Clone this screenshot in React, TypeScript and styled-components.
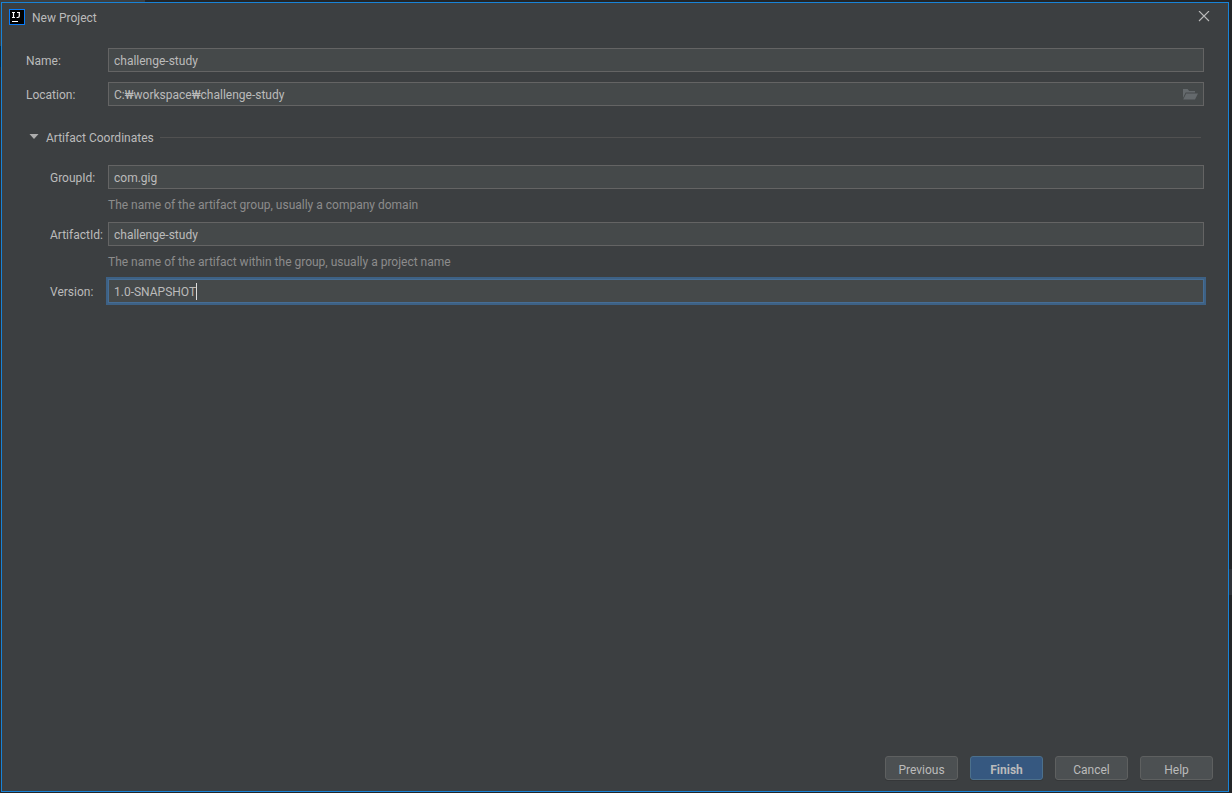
import React from "react";
import styled, { createGlobalStyle, css } from "styled-components";

const GlobalStyle = createGlobalStyle`
  * { box-sizing: border-box; }
  body {
    margin: 0;
    background: #232527;
    color: #bbbbbb;
    font-family: Roboto, "Noto Sans CJK KR", sans-serif;
    font-size: 12px;
    line-height: 16px;
  }
  input, button { font: inherit; color: inherit; }
`;

const Backdrop = styled.div`
  min-height: 100vh;
  display: flex;
  padding: 2px 3px 1px 1px;
  background:
    linear-gradient(#3c3f41, #3c3f41) 0 0 / 145px 2px no-repeat,
    linear-gradient(#3c3f41 46px, #0d293e 46px 67px, #2b2d2f 67px) 0 0 / 1px 100% no-repeat,
    linear-gradient(#232527 569px, #2f3338 569px 595px, #232527 595px) 100% 0 / 3px 100% no-repeat,
    #232527;
`;

const Dialog = styled.main`
  flex: 1;
  display: flex;
  flex-direction: column;
  background: #3c3f41;
  border: 1px solid #1883d7;
`;

const TitleBar = styled.header`
  display: flex;
  align-items: center;
  height: 28px;
  padding: 0 18px 0 7px;
`;

const Title = styled.h1`
  flex: 1;
  margin: 0 0 0 7px;
  padding-top: 2px;
  font-size: 12px;
  font-weight: 400;
`;

const IconButton = styled.button`
  display: flex;
  padding: 0;
  border: 0;
  background: none;
`;

const Form = styled.form`
  flex: 1;
  display: flex;
  flex-direction: column;
  padding: 17px 24px 11px;
`;

const Fields = styled.div`
  display: flex;
  flex-direction: column;
  gap: 10px;
`;

const Row = styled.div<{ $nested?: boolean }>`
  display: grid;
  grid-template-columns: ${(p) => (p.$nested ? "58px" : "82px")} minmax(0, 1fr);
  align-items: center;
`;

const Label = styled.label`
  padding-top: 2px;
  white-space: nowrap;
`;

const Field = styled.div<{ $focused?: boolean }>`
  display: flex;
  align-items: center;
  height: 24px;
  padding: 0 5px;
  background: #45494a;
  border: 1px solid #646464;
  ${(p) =>
    p.$focused &&
    css`
      border-color: #466d94;
      box-shadow: 0 0 0 2px #3d6185;
    `}
`;

const TextInput = styled.input<{ $hug?: boolean }>`
  min-width: 0;
  padding: 2px 0 0;
  border: 0;
  outline: 0;
  background: none;
  ${(p) => (p.$hug ? "field-sizing: content;" : "flex: 1;")}
`;

const Caret = styled.span`
  width: 1px;
  height: 17px;
  background: #dddddd;
`;

const SectionHeader = styled.div`
  display: flex;
  align-items: center;
  gap: 6px;
  padding: 22px 3px 19px 0;
  &::after {
    content: "";
    flex: 1;
    height: 1px;
    background: #515151;
  }
`;

const SectionToggle = styled.button`
  display: flex;
  align-items: center;
  gap: 7px;
  padding: 0 0 0 3px;
  border: 0;
  background: none;
`;

const SectionTitle = styled.span`
  padding-top: 2px;
`;

const Coordinates = styled.div`
  padding-left: 24px;
`;

const Hint = styled.p`
  margin: 0 0 0 58px;
  padding: 8px 0 9px;
  color: #8c8c8c;
`;

const Actions = styled.footer`
  display: flex;
  justify-content: flex-end;
  gap: 12px;
  padding: 0 15px 11px;
`;

const Button = styled.button<{ $primary?: boolean }>`
  width: 73px;
  height: 24px;
  padding: 3px 0 0;
  border: 1px solid ${(p) => (p.$primary ? "#4c708c" : "#5e6060")};
  border-radius: 3px;
  background: ${(p) => (p.$primary ? "#365880" : "#4c5052")};
  font-weight: ${(p) => (p.$primary ? 700 : 400)};
  box-shadow: 0 1px 0 #353739;
`;

const AppIcon = () => (
  <svg width="16" height="16" viewBox="0 0 16 16" aria-hidden="true">
    <rect width="16" height="16" fill="#087cfa" />
    <rect x="1" y="1" width="14" height="14" fill="#000" />
    <path
      d="M3 3.5h3M4.5 3.5v5M3 8.5h3M8 3.5h3M10.3 3.5v3.6q0 1.4-1.4 1.4H7.6M3 12.5h6"
      fill="none"
      stroke="#fff"
      strokeWidth="1.2"
    />
  </svg>
);

const CloseIcon = () => (
  <svg width="12" height="12" viewBox="0 0 12 12" aria-hidden="true">
    <path d="M1 0l10 10M11 0L1 10" stroke="#bbbbbb" strokeWidth="1.1" />
  </svg>
);

const ArrowIcon = () => (
  <svg width="10" height="6" viewBox="0 0 10 6" aria-hidden="true">
    <path d="M.5 0h9L5 5z" fill="#adadad" />
  </svg>
);

const FolderIcon = () => (
  <svg width="16" height="12" viewBox="0 0 16 12" aria-hidden="true">
    <path d="M1 10V1h4.6l1.5 2H13v1.5H3.7z" fill="#64696c" />
    <path d="M4.2 5.5H16L13 11.5H1.2z" fill="#64696c" />
  </svg>
);

const coordinates = [
  {
    id: "group-id",
    label: "GroupId:",
    value: "com.gig",
    hint: "The name of the artifact group, usually a company domain",
  },
  {
    id: "artifact-id",
    label: "ArtifactId:",
    value: "challenge-study",
    hint: "The name of the artifact within the group, usually a project name",
  },
];

export default function App() {
  return (
    <>
      <GlobalStyle />
      <Backdrop>
        <Dialog>
          <TitleBar>
            <AppIcon />
            <Title>New Project</Title>
            <IconButton type="button" aria-label="Close">
              <CloseIcon />
            </IconButton>
          </TitleBar>
          <Form>
            <Fields>
              <Row>
                <Label htmlFor="name">Name:</Label>
                <Field>
                  <TextInput id="name" defaultValue="challenge-study" />
                </Field>
              </Row>
              <Row>
                <Label htmlFor="location">Location:</Label>
                <Field>
                  <TextInput id="location" defaultValue="C:₩workspace₩challenge-study" />
                  <IconButton type="button" aria-label="Browse">
                    <FolderIcon />
                  </IconButton>
                </Field>
              </Row>
            </Fields>
            <SectionHeader>
              <SectionToggle type="button" aria-expanded="true">
                <ArrowIcon />
                <SectionTitle>Artifact Coordinates</SectionTitle>
              </SectionToggle>
            </SectionHeader>
            <Coordinates>
              {coordinates.map((c) => (
                <React.Fragment key={c.id}>
                  <Row $nested>
                    <Label htmlFor={c.id}>{c.label}</Label>
                    <Field>
                      <TextInput id={c.id} defaultValue={c.value} aria-describedby={`${c.id}-hint`} />
                    </Field>
                  </Row>
                  <Hint id={`${c.id}-hint`}>{c.hint}</Hint>
                </React.Fragment>
              ))}
              <Row $nested>
                <Label htmlFor="version">Version:</Label>
                <Field $focused>
                  <TextInput id="version" $hug defaultValue="1.0-SNAPSHOT" />
                  <Caret />
                </Field>
              </Row>
            </Coordinates>
          </Form>
          <Actions>
            <Button type="button">Previous</Button>
            <Button type="button" $primary>
              Finish
            </Button>
            <Button type="button">Cancel</Button>
            <Button type="button">Help</Button>
          </Actions>
        </Dialog>
      </Backdrop>
    </>
  );
}
